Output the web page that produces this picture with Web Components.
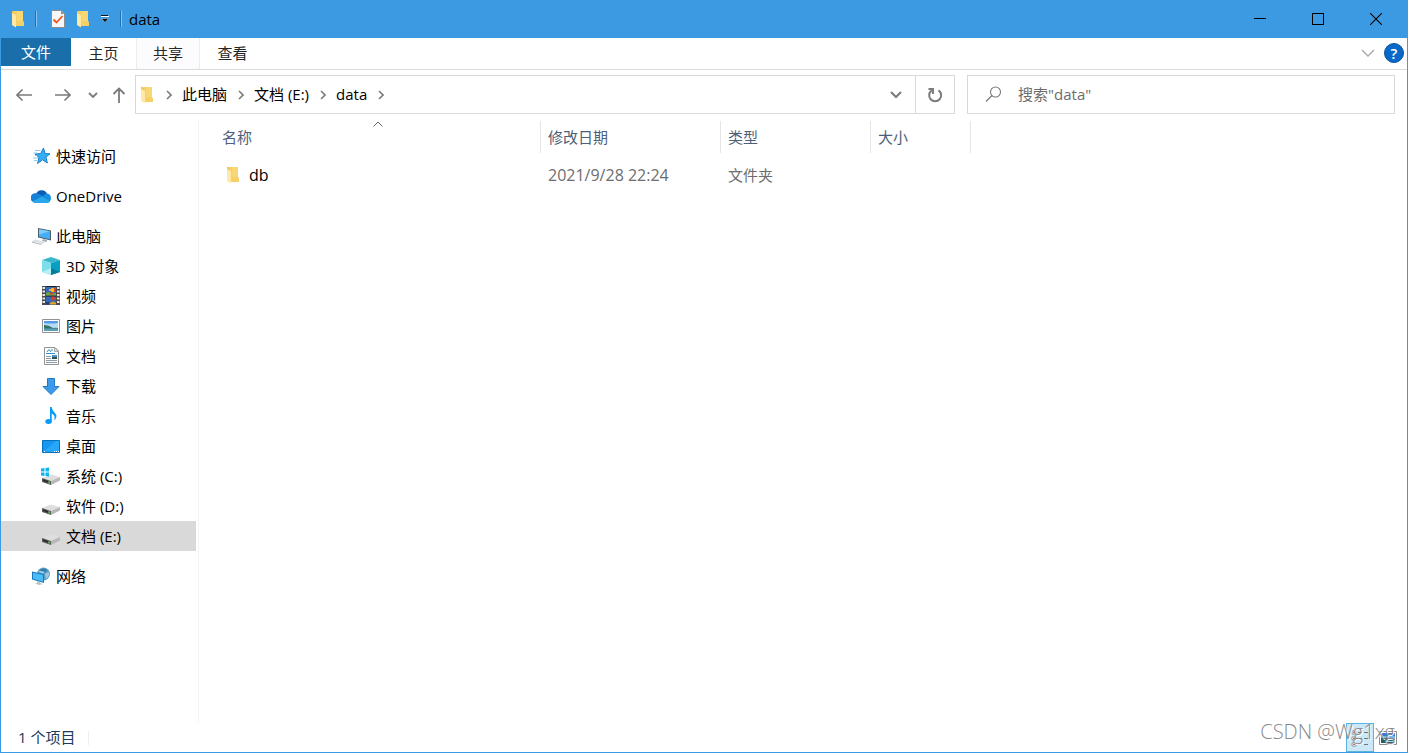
<!DOCTYPE html>
<html lang="zh-CN">
<head>
<meta charset="utf-8">
<meta name="viewport" content="width=device-width, initial-scale=1">
<title>data</title>
<style>
body { margin: 0; font: 15px/20px "Open Sans", "Noto Sans CJK SC", sans-serif; color: #000; background: #fff; }
</style>
</head>
<body>
<explorer-window>
  <title-bar slot="title">data</title-bar>
  <ribbon-tabs slot="ribbon"></ribbon-tabs>
  <nav-bar slot="nav">
    <path-crumb>此电脑</path-crumb>
    <path-crumb>文档 (E:)</path-crumb>
    <path-crumb>data</path-crumb>
  </nav-bar>
  <side-tree slot="side">
    <tree-item icon="star">快速访问</tree-item>
    <tree-item icon="cloud" group>OneDrive</tree-item>
    <tree-item icon="pc" group>此电脑</tree-item>
    <tree-item icon="cube" child>3D 对象</tree-item>
    <tree-item icon="video" child>视频</tree-item>
    <tree-item icon="picture" child>图片</tree-item>
    <tree-item icon="doc" child>文档</tree-item>
    <tree-item icon="download" child>下载</tree-item>
    <tree-item icon="music" child>音乐</tree-item>
    <tree-item icon="desktop" child>桌面</tree-item>
    <tree-item icon="sysdrive" child>系统 (C:)</tree-item>
    <tree-item icon="drive" child>软件 (D:)</tree-item>
    <tree-item icon="drive" child selected>文档 (E:)</tree-item>
    <tree-item icon="network" group>网络</tree-item>
  </side-tree>
  <file-list slot="files"></file-list>
  <status-bar slot="status">1 个项目</status-bar>
</explorer-window>

<script>
const driveBody = `
  <path d="M1 12 10 8.500 19 11 10 15Z" fill="#dedede"/>
  <path d="M1 12 10 15V19L1 16Z" fill="#5c5c5c"/>
  <path d="M10 15 19 11V14.500L10 19Z" fill="#b8b8b8"/>
  <path d="M2 13.300 7 15V16.800L2 15Z" fill="#2a2a2a"/>
  <path d="M7.500 15.500h1.500v2h-1.500z" fill="#2fe03a"/>`;

const ICONS = {
  folder: [14, 18, `
    <path d="M3 1H12V11L13 12V16H3Z" fill="#f5cf68"/>
    <path d="M6 1H12V11H6Z" fill="#f8d775"/>
    <path d="M1 1H3L5 4V17.500L1 15Z" fill="#ffe9a6"/>
    <path d="M1 1H3L5 4V5L1 3Z" fill="#f1c65b"/>`],
  check: [14, 18, `
    <path d="M.5 .5H10L13.500 4V17.500H.5Z" fill="#f7f7f9" stroke="#8d8d8d"/>
    <path d="M10 1V4H13Z" fill="#8d8d8d"/>
    <path d="M2.500 9.500 5.500 12.500 11.500 6" fill="none" stroke="#f1551c" stroke-width="1.800"/>`],
  custom: [8, 8, `<path d="M0 1.500H8" stroke="#fff"/><path d="M0 0H7V1H0Z" fill="#111"/><path d="M.5 3.500H7.500L4 7.500Z" fill="#111" stroke="#dfefff" stroke-width=".4"/>`],
  min: [12, 12, `<path d="M0 5.500H12" stroke="#000"/>`],
  max: [12, 12, `<rect x=".5" y=".5" width="11" height="11" fill="none" stroke="#000"/>`],
  close: [12, 12, `<path d="M0 0 12 12M12 0 0 12" stroke="#000" stroke-width="1.100"/>`],
  wide: [14, 8, `<path d="M1 1 7 7 13 1" fill="none" stroke="#a6a6a6" stroke-width="1.300"/>`],
  sort: [10, 6, `<path d="M.5 5.500 5 1 9.500 5.500" fill="none" stroke="#666"/>`],
  back: [16, 14, `<path d="M1 7H16M6.500 1.500 1 7 6.500 12.500" fill="none" stroke="#7b7b7b" stroke-width="1.600"/>`],
  forward: [16, 14, `<path d="M0 7H15M9.500 1.500 15 7 9.500 12.500" fill="none" stroke="#7b7b7b" stroke-width="1.600"/>`],
  up: [14, 16, `<path d="M7 1.500V16M1.500 7 7 1.500 12.500 7" fill="none" stroke="#7b7b7b" stroke-width="1.800"/>`],
  down: [10, 8, `<path d="M1 2 5 6 9 2" fill="none" stroke="#7b7b7b" stroke-width="1.800"/>`],
  drop: [12, 8, `<path d="M1 1 6 6 11 1" fill="none" stroke="#7b7b7b" stroke-width="2"/>`],
  right: [6, 10, `<path d="M1 1 5 5 1 9" fill="none" stroke="#7b7b7b" stroke-width="1.600"/>`],
  refresh: [16, 16, `<path d="M4.800 3.300A6 6 0 1 0 11.500 3.300" fill="none" stroke="#7b7b7b" stroke-width="2"/><path d="M1.500 2H6V7" fill="none" stroke="#7b7b7b" stroke-width="1.900"/>`],
  search: [17, 17, `<circle cx="10.500" cy="6" r="5" fill="none" stroke="#7b7b7b" stroke-width="1.100"/><path d="M7 9.500 1 15.500" stroke="#7b7b7b" stroke-width="1.200"/>`],
  star: [20, 18, `
    <path d="M12.500 1 14 6.500 19 6.800 15 10.200 16.300 16 11.500 12.800 6.500 16.500 8 10.500 4 7 9.700 6.600Z" fill="#34adf3" stroke="#1b7fc9"/>
    <path d="M4 3.500H9.500M2.500 6H6M4 8.500H6.500M2 11H7M3 13.500H6" stroke="#7ac5f4" stroke-width=".9"/>`],
  cloud: [20, 14, `
    <path d="M5 5A6 6 0 0 1 16 4.500L13 9 5 7Z" fill="#0a5cb5"/>
    <path d="M4 13.500A4.600 4.600 0 0 1 4.300 4.300Q7.500 4 10 6L13 8 8 13Z" fill="#1480d8"/>
    <path d="M12 7Q13.500 4.500 16 4.500A4.700 4.700 0 0 1 17 13.500L8 12Z" fill="#1490df"/>
    <path d="M1.500 12.500 11 7.500 19 12.500Q18 14 16 14H4Q2.500 14 1.500 12.500Z" fill="#29a7ea"/>`],
  pc: [20, 18, `
    <path d="M7 1 20 3.500V13.500L7 10.500Z" fill="#4d5d68"/>
    <path d="M8 2.200 19 4.300V12.300L8 9.700Z" fill="#43adf5"/><path d="M8 2.200 19 4.300 8 7.500Z" fill="#7dccfa"/>
    <path d="M12 12 16 13V15L11 14Z" fill="#a4aeb3"/>
    <path d="M4 12.500 14 15 10 17.500 1 14.500Z" fill="#d3d8dc"/><path d="M1 14.500 10 17.200V18L1 15.500Z" fill="#adb4b8"/>
    <path d="M4 13.300 11 15.500M2.500 14 9.500 16.400" stroke="#f2f4f5" stroke-width=".6"/>`],
  cube: [20, 20, `
    <path d="M10 1 19 4 10 7 1 4Z" fill="#38b7c9"/>
    <path d="M1 4 10 7V19L1 16Z" fill="#7bdee9"/>
    <path d="M10 7 19 4V16L10 19Z" fill="#08a0c2"/>
    <path d="M1 16 10 12 10 19Z" fill="#b5f0f3"/>
    <path d="M10 12 19 16 10 19Z" fill="#087c98"/>`],
  video: [20, 20, `
    <path d="M1 0H19V19H1Z" fill="#4a4a4a"/>
    <path d="M1.500 1H4V3H1.500ZM1.500 4.500H4V6.500H1.500ZM1.500 8H4V10H1.500ZM1.500 11.500H4V13.500H1.500ZM1.500 15H4V17H1.500ZM16 1H18.500V3H16ZM16 4.500H18.500V6.500H16ZM16 8H18.500V10H16ZM16 11.500H18.500V13.500H16ZM16 15H18.500V17H16Z" fill="#e6e6e6"/>
    <path d="M5 1H15V9.500H5ZM5 10.500H15V18.500H5Z" fill="#3569b8"/>
    <path d="M5 0H15V1H5ZM5 9.500H15V10.500H5Z" fill="#202020"/>
    <circle cx="12" cy="4" r="2.300" fill="#f3bd2c"/><path d="M13 2H15V6H13Z" fill="#db3e28"/><path d="M8 3H10V5H8Z" fill="#e8b12d"/>
    <path d="M5 7Q8 5.500 10 7.500L15 7V9.500H5Z" fill="#71a83d"/><path d="M9 6.500H12V8.500H9Z" fill="#c34a29"/>
    <circle cx="12" cy="12.500" r="2" fill="#db3e28"/><path d="M9 17Q12 14.500 15 17V18.500H9Z" fill="#e2a329"/><path d="M5 16H8V18.500H5Z" fill="#243f78"/>`],
  picture: [20, 20, `
    <path d="M1.500 3.500H18.500V16.500H1.500Z" fill="#fff" stroke="#929292"/>
    <path d="M3 5H17V15H3Z" fill="#b5dcf5"/>
    <path d="M3 5H17V7Q10 8 3 7Z" fill="#5a9ae8"/>
    <path d="M3 9Q8 9 12 12 15 11.500 17 12V13H3Z" fill="#357363"/>
    <path d="M3 12.500H17V15H3Z" fill="#5a9fba"/>`],
  doc: [20, 20, `
    <path d="M3.500 1.500H14L17.500 5V18.500H3.500Z" fill="#fcfcfc" stroke="#929292"/><path d="M13.500 1.500V5.500H17.500Z" fill="#ddd" stroke="#929292" stroke-width=".7"/>
    <path d="M5 10.500H10M5 12.500H10M5 14.500H16M5 16.500H16" stroke="#8b9ba8"/><path d="M6 6 8 3.500 10 6M10 4H12M5 7.500H14" fill="none" stroke="#2d94c9"/>
    <path d="M11 9H16V13H11Z" fill="#4d94cd"/><path d="M11 11H16V13H11Z" fill="#2b5557"/>`],
  download: [20, 20, `<path d="M6.500 2.500H13.500V10.500H18L10 18.500 2 10.500H6.500Z" fill="#3d9aea" stroke="#2179c5"/>`],
  music: [20, 20, `<ellipse cx="7.500" cy="15.500" rx="3.200" ry="2.500" fill="#089cf5"/><path d="M9 1H10.700Q11 4 13.500 6.500 17.500 10.500 13 14.500 15 9.500 10.700 7.500V16H9Z" fill="#089cf5"/>`],
  desktop: [20, 20, `<path d="M1.500 4.500H18.500V16.500H1.500Z" fill="#1696f0" stroke="#0871bc"/><path d="M2 16 15 5H18V16Z" fill="#27a7fa"/><path d="M3 15.500H4M13 15.500H14M15 15.500H16M17 15.500H18" stroke="#fff"/>`],
  drive: [20, 20, driveBody],
  sysdrive: [20, 20, driveBody + `<path d="M0 2.500 3.500 2V5.500H0ZM4.500 2 8 1.500V5.500H4.500ZM0 6.500H3.500V10L0 9.500ZM4.500 6.500H8V10.500L4.500 10Z" fill="#10b5ee"/>`],
  network: [20, 20, `
    <circle cx="12.500" cy="8" r="6.500" fill="#5a9fc8"/><path d="M10 2Q15 4 12 8L8 6ZM14 8 18 6Q19 10 15 13Z" fill="#9ec9dc"/>
    <path d="M8 4Q12 1 16 4L15 6 10 5Z" fill="#347ba5"/>
    <path d="M1 5.500 13 8V17L1 13.500Z" fill="#197bbd"/><path d="M2 6.800 12 8.900V15.700L2 12.800Z" fill="#4cbcf8"/>
    <path d="M6 15 9 16V17L12 18 8 19 4 17.500 6 17Z" fill="#bac2c7"/>`],
  details: [18, 20, `
    <path d="M1 3H5V6H1ZM1 9H5V12H1ZM1 15H5V18H1Z" fill="#fff" stroke="#858585" stroke-width=".8"/>
    <path d="M2 4.500H4M2 10.500H4M2 16.500H4" stroke="#c0705c"/>
    <path d="M7 4.500H11M13 4.500H17M7 10.500H11M13 10.500H17M7 16.500H11M13 16.500H17" stroke="#697982"/>`],
  thumbs: [18, 14, `<path d="M.5 .5H17.500V13.500H.5Z" fill="#fff" stroke="#8c8c8c"/><path d="M2 2H16V12H2Z" fill="#74b5ed"/><path d="M2 2H16V5H2Z" fill="#357bd6"/><path d="M2 7Q7 6 10 9L16 8V12H2Z" fill="#285d64"/><path d="M8 10H16V11H8Z" fill="#b4d9eb"/>`]
};

const RESET = `
  :host { box-sizing: border-box; }
  *, *::before { box-sizing: border-box; }
  button { font: inherit; color: inherit; background: none; border: 0; padding: 0; margin: 0; display: flex; align-items: center; justify-content: center; }
  a { color: inherit; text-decoration: none; }`;

function define(name, css, html, setup) {
  const template = document.createElement("template");
  template.innerHTML = `<style>${RESET}${css}</style>${html}`;
  customElements.define(name, class extends HTMLElement {
    constructor() {
      super();
      this.attachShadow({ mode: "open" }).append(template.content.cloneNode(true));
    }
    connectedCallback() { if (setup) setup(this, this.shadowRoot); }
  });
}

define("ui-icon", `:host { display: inline-flex; flex: none; } svg { display: block; }`, `<span></span>`, (el, root) => {
  const [w, h, body] = ICONS[el.getAttribute("name")];
  root.querySelector("span").innerHTML =
    `<svg width="${w}" height="${h}" viewBox="0 0 ${w} ${h}" aria-hidden="true">${body}</svg>`;
});

define("explorer-window", `
  :host { display: grid; grid-template-rows: auto auto auto 1fr auto; min-height: 100vh; position: relative;
    border: solid #3c9ae2; border-width: 0 1px 1px; background: #fff; }
  main { display: grid; grid-template-columns: 198px 1fr; }
  .mark { position: absolute; right: 12px; bottom: 8px; font: 300 20px/24px "Open Sans", sans-serif; color: #8a8a8a;
    text-shadow: 1px 1px 0 #fff; pointer-events: none; }`, `
  <slot name="title"></slot><slot name="ribbon"></slot><slot name="nav"></slot>
  <main><slot name="side"></slot><slot name="files"></slot></main>
  <slot name="status"></slot>
  <div class="mark">CSDN @Wg1xg</div>`);

define("title-bar", `
  :host { display: flex; align-items: center; height: 38px; background: #3c9ae2; padding: 0 2px 0 10px; }
  .tools { display: flex; align-items: center; }
  .line { width: 2px; height: 16px; background: linear-gradient(90deg, #2370ae 50%, #8bc4f0 50%); }
  .first { margin: 0 14px 0 10px; }
  .gap { margin-left: 11px; }
  .last { margin: 0 7px 0 11px; }
  h1 { font: inherit; margin: 0; flex: 1; }
  .win { width: 58px; height: 38px; }`, `
  <div class="tools">
    <ui-icon name="folder"></ui-icon><span class="line first"></span>
    <button aria-label="属性"><ui-icon name="check"></ui-icon></button>
    <button class="gap" aria-label="新建文件夹"><ui-icon name="folder"></ui-icon></button>
    <button class="gap" aria-label="自定义快速访问工具栏"><ui-icon name="custom"></ui-icon></button>
    <span class="line last"></span>
  </div>
  <h1><slot></slot></h1>
  <button class="win" aria-label="最小化"><ui-icon name="min"></ui-icon></button>
  <button class="win" aria-label="最大化"><ui-icon name="max"></ui-icon></button>
  <button class="win" aria-label="关闭"><ui-icon name="close"></ui-icon></button>`);

define("ribbon-tabs", `
  :host { display: flex; height: 32px; border-bottom: 1px solid #dadbdc; padding-right: 3px; color: #262626; }
  .tab { height: 31px; width: 66px; padding-bottom: 2px; }
  .file { width: 70px; height: 28px; background: #1a6fab; color: #fff; }
  .home { width: 65px; }
  .share { width: 63px; background: #fcfcff; }
  .share, .view { border-left: 1px solid #ececec; }
  .right { margin-left: auto; display: flex; align-items: center; gap: 9px; padding-bottom: 1px; }
  .help { width: 20px; height: 20px; border-radius: 50%; background: #0a68c8; border: 1px solid #0b559c; color: #fff; font-weight: 600; }`, `
  <button class="file">文件</button><button class="tab home">主页</button><button class="tab share">共享</button><button class="tab view">查看</button>
  <div class="right"><button aria-label="展开功能区"><ui-icon name="wide"></ui-icon></button><button class="help">?</button></div>`);

define("path-crumb", `
  :host { display: flex; align-items: center; gap: 11px; }
  a { white-space: nowrap; padding-bottom: 2px; }`, `
  <a href="#"><slot></slot></a><ui-icon name="right"></ui-icon>`);

define("nav-bar", `
  :host { display: grid; grid-template-columns: 122px 23fr 12fr; gap: 12px; height: 50px; padding: 5px 12px 6px 0; }
  .arrows { display: flex; align-items: center; padding-left: 15px; }
  .arrows .fwd { margin-left: 23px; }
  .arrows .hist { margin-left: 17px; }
  .arrows .up { margin-left: 14px; }
  .box { display: flex; border: 1px solid #d9d9d9; background: #fff; height: 39px; min-width: 0; }
  .path { display: flex; align-items: center; gap: 10px; padding-left: 4px; flex: 1; min-width: 0; }
  .start { margin-left: 2px; }
  .drop { width: 38px; }
  .refresh { width: 39px; border-left: 1px solid #d9d9d9; }
  label { align-items: center; padding-left: 17px; gap: 16px; }
  input { font: inherit; border: 0; outline: 0; padding: 0 0 2px; flex: 1; min-width: 0; background: none; color: #000; }
  input::placeholder { color: #6d6d6d; opacity: 1; }`, `
  <div class="arrows">
    <button aria-label="后退"><ui-icon name="back"></ui-icon></button>
    <button class="fwd" aria-label="前进"><ui-icon name="forward"></ui-icon></button>
    <button class="hist" aria-label="最近浏览的位置"><ui-icon name="down"></ui-icon></button>
    <button class="up" aria-label="上移"><ui-icon name="up"></ui-icon></button>
  </div>
  <div class="box">
    <div class="path"><ui-icon name="folder"></ui-icon><ui-icon class="start" name="right"></ui-icon><slot></slot></div>
    <button class="drop" aria-label="以前的位置"><ui-icon name="drop"></ui-icon></button>
    <button class="refresh" aria-label="刷新"><ui-icon name="refresh"></ui-icon></button>
  </div>
  <label class="box"><ui-icon name="search"></ui-icon><input type="text" placeholder="搜索&quot;data&quot;" aria-label="搜索"></label>`);

define("side-tree", `
  :host { display: block; padding: 21px 2px 16px 0; border-right: 1px solid #f3f3f3; }`, `<nav><slot></slot></nav>`);

define("tree-item", `
  :host { display: block; }
  :host([group]) { margin-top: 10px; }
  a { display: flex; align-items: center; height: 30px; padding-left: 30px; gap: 5px; white-space: nowrap; }
  :host([child]) a { padding-left: 40px; }
  :host([selected]) a { background: #d9d9d9; }`, `
  <a href="#"><slot></slot></a>`, (el, root) => {
  const icon = document.createElement("ui-icon");
  icon.setAttribute("name", el.getAttribute("icon"));
  root.querySelector("a").prepend(icon);
});

define("file-list", `
  :host { display: block; padding-top: 1px; }
  table { border-collapse: separate; border-spacing: 0; table-layout: fixed; width: 772px; }
  th, td { padding: 0; font-weight: 400; text-align: left; }
  th { height: 32px; border-right: 1px solid #e5e5e5; color: #4c607a; }
  th button { position: relative; width: 100%; height: 32px; padding-left: 7px; justify-content: flex-start; }
  .name { width: 342px; padding-left: 16px; }
  .date { width: 180px; }
  .type { width: 150px; }
  .size { width: 100px; }
  .sort { position: absolute; top: 0; left: 50%; margin-left: -5px; }
  td { height: 44px; padding-left: 7px; color: #6d6d6d; }
  td:first-child { padding-left: 27px; color: #000; }
  td a { display: flex; align-items: center; gap: 9px; }
  .latin { font-size: 16px; }`, `
  <table>
    <thead><tr>
      <th class="name"><button>名称<ui-icon class="sort" name="sort"></ui-icon></button></th>
      <th class="date"><button>修改日期</button></th>
      <th class="type"><button>类型</button></th>
      <th class="size"><button>大小</button></th>
    </tr></thead>
    <tbody><tr><td class="latin"><a href="#db"><ui-icon name="folder"></ui-icon>db</a></td><td class="latin">2021/9/28 22:24</td><td>文件夹</td><td></td></tr></tbody>
  </table>`);

define("status-bar", `
  :host { display: flex; align-items: center; height: 29px; padding: 0 10px 0 17px; color: #1e395b; }
  .text { padding-bottom: 2px; }
  .line { width: 1px; height: 14px; background: #eee; margin-left: 13px; }
  .views { display: flex; align-items: center; margin-left: auto; gap: 5px; }
  .on { width: 28px; height: 29px; background: #cce8f6; border: 1px solid #5ab4de; }`, `
  <span class="text"><slot></slot></span><span class="line"></span>
  <div class="views"><button class="on" aria-label="详细信息"><ui-icon name="details"></ui-icon></button><button aria-label="大缩略图"><ui-icon name="thumbs"></ui-icon></button></div>`);
</script>
</body>
</html>
